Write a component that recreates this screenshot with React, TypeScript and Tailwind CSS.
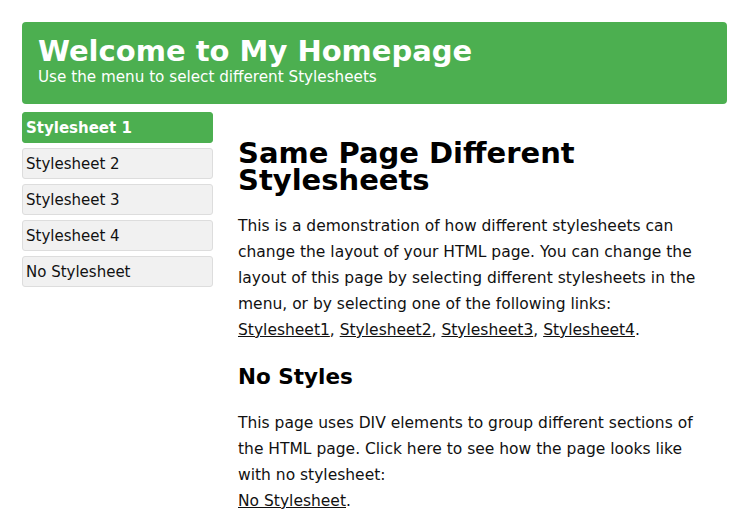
export default function App() {
  const font = { fontFamily: '"DejaVu Sans", sans-serif' };
  const items = ["Stylesheet 1", "Stylesheet 2", "Stylesheet 3", "Stylesheet 4", "No Stylesheet"];
  return (
    <div className="min-h-[524px] bg-white px-[22px] pt-[22px] text-black" style={font}>
      <div className="rounded-[4px] bg-[#4caf50] px-[16px] pt-[11px] pb-[19px] text-white">
        <div className="text-[29px] font-bold leading-[36px]">Welcome to My Homepage</div>
        <div className="text-[15.2px] leading-[16px]">Use the menu to select different Stylesheets</div>
      </div>
      <div className="flex">
        <div className="w-[191px] shrink-0 pt-[8px]">
          {items.map((t, i) => (
            <div
              key={t}
              className={
                i === 0
                  ? "mb-[5px] h-[31px] rounded-[3px] border border-[#4caf50] bg-[#4caf50] px-[3px] pt-[2px] text-[15px] leading-[27px] font-bold text-white"
                  : "mb-[5px] h-[31px] rounded-[3px] border border-[#dddddd] bg-[#f1f1f1] px-[3px] pt-[2px] text-[15px] leading-[27px] text-[#111]"
              }
            >
              {t}
            </div>
          ))}
        </div>
        <div className="w-[490px] pl-[25px] pt-[36px] text-[15.5px] leading-[26px] text-[#111]">
          <h1 className="text-[29px] font-bold leading-[27px] text-black">Same Page Different Stylesheets</h1>
          <p className="mt-[19px]">
            This is a demonstration of how different stylesheets can change the layout of your HTML page. You can change the layout of this page by selecting different stylesheets in the menu, or by selecting one of the following links:
            <br />
            <a className="underline" href="#">Stylesheet1</a>, <a className="underline" href="#">Stylesheet2</a>,{" "}
            <a className="underline" href="#">Stylesheet3</a>, <a className="underline" href="#">Stylesheet4</a>.
          </p>
          <h2 className="mt-[19px] text-[21.5px] font-bold leading-[30px] text-black">No Styles</h2>
          <p className="mt-[18px]">
            This page uses DIV elements to group different sections of the HTML page. Click here to see how the page looks like with no stylesheet:
            <br />
            <a className="underline" href="#">No Stylesheet</a>.
          </p>
        </div>
      </div>
    </div>
  );
}
